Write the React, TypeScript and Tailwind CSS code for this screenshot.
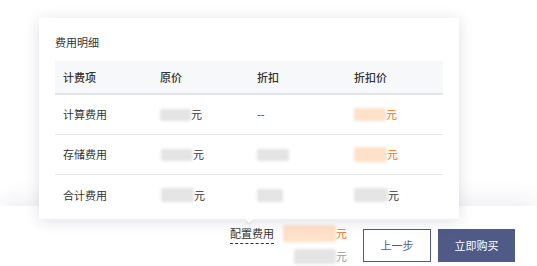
import React from "react";

const font = { fontFamily: '"Noto Sans CJK SC", "Noto Sans", sans-serif' };

function Blur({ w, h, orange, className = "" }: { w: number; h: number; orange?: boolean; className?: string }) {
  return (
    <span
      className={`inline-block rounded-[2px] blur-[1.5px] ${orange ? "bg-[#ffe0c8]" : "bg-[#e4e4e4]"} ${className}`}
      style={{ width: w, height: h }}
    />
  );
}

function Cell({ children, className = "" }: { children?: React.ReactNode; className?: string }) {
  return <div className={`flex items-center pl-[8px] ${className}`}>{children}</div>;
}

export default function App() {
  return (
    <div className="relative w-[537px] h-[266px] overflow-hidden bg-white text-[11px] text-[#333]" style={font}>
      <div className="flex flex-col h-full">
        <div className="flex-1 bg-white" />
        <div className="h-[60px] bg-white shadow-[0_-6px_22px_rgba(40,40,90,0.08)] flex items-start justify-end pt-[17px] pr-[22px]">
          <div className="leading-[20px] border-b border-dashed border-[#333] h-[21px] text-[11px]">配置费用</div>
          <div className="ml-[9px] flex flex-col items-end">
            <div className="flex items-center h-[20px]">
              <Blur w={53} h={17} orange />
              <span className="text-[#ff6a00] leading-[20px]">元</span>
            </div>
            <div className="flex items-center h-[20px] mt-[3px]">
              <Blur w={42} h={15} />
              <span className="text-[#999] leading-[20px]">元</span>
            </div>
          </div>
          <button className="ml-[16px] mt-[6px] w-[68px] h-[33px] border border-[#4f5b86] bg-white text-[#4f5b86] text-[11px] flex items-center justify-center">
            上一步
          </button>
          <button className="ml-[7px] mt-[6px] w-[77px] h-[33px] bg-[#4f5b86] text-white text-[11px] flex items-center justify-center">
            立即购买
          </button>
        </div>
      </div>

      <div className="absolute left-[39px] top-[18px] w-[420px] h-[201px] bg-white shadow-[0_2px_14px_rgba(30,30,80,0.14)] px-[16px] pt-[16px]">
        <div className="leading-[17px]">费用明细</div>
        <div className="mt-[10px] w-[388px]">
          <div className="grid grid-cols-4 h-[34px] bg-[#f7f8fa] border-b-2 border-[#e3e5ea] font-medium">
            <Cell>计费项</Cell>
            <Cell>原价</Cell>
            <Cell>折扣</Cell>
            <Cell>折扣价</Cell>
          </div>
          <div className="grid grid-cols-4 h-[40px] border-b border-[#e6e7eb]">
            <Cell>计算费用</Cell>
            <Cell className="pl-[5px]"><Blur w={31} h={12} />元</Cell>
            <Cell>--</Cell>
            <Cell className="pl-[3px] text-[#ff6a00]"><Blur w={32} h={13} orange />元</Cell>
          </div>
          <div className="grid grid-cols-4 h-[40px] border-b border-[#e6e7eb]">
            <Cell>存储费用</Cell>
            <Cell className="pl-[9px]"><Blur w={32} h={12} />元</Cell>
            <Cell className="pl-[4px]"><Blur w={32} h={12} /></Cell>
            <Cell className="text-[#ff6a00]"><Blur w={33} h={15} orange />元</Cell>
          </div>
          <div className="grid grid-cols-4 h-[40px]">
            <Cell>合计费用</Cell>
            <Cell className="pl-[9px]"><Blur w={33} h={14} />元</Cell>
            <Cell className="pl-[4px]"><Blur w={26} h={13} /></Cell>
            <Cell><Blur w={34} h={14} />元</Cell>
          </div>
        </div>
        <div className="absolute left-[206px] top-[201px] w-0 h-0 border-l-[4px] border-r-[4px] border-t-[4px] border-l-transparent border-r-transparent border-t-white drop-shadow-[0_2px_1px_rgba(30,30,80,0.12)]" />
      </div>
    </div>
  );
}
